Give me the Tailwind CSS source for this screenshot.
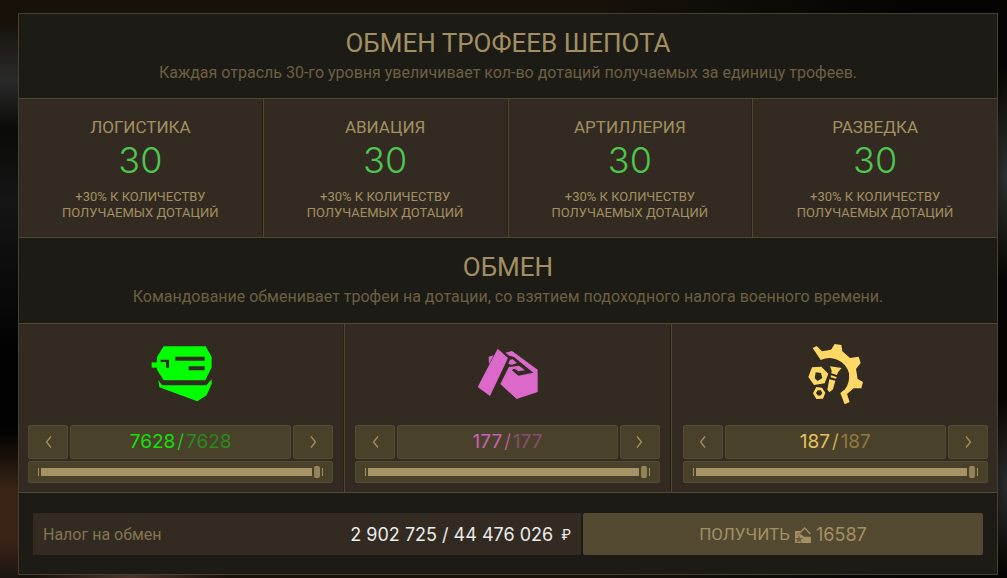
<!DOCTYPE html>
<html lang="ru">
<head>
<meta charset="utf-8">
<meta name="viewport" content="width=device-width, initial-scale=1">
<title>Обмен трофеев</title>
<script src="https://cdn.jsdelivr.net/npm/@tailwindcss/browser@4"></script>
</head>
<body class="min-h-screen bg-[#0b0a08] bg-[radial-gradient(ellipse_30px_110px_at_100%_175px,#303030,transparent),radial-gradient(ellipse_30px_90px_at_100%_485px,#2c2b2b,transparent),radial-gradient(ellipse_100px_30px_at_130px_578px,#4a352b,transparent),linear-gradient(to_right,#17110a_0,#17110a_60%,#050403_90%)] font-['Roboto','Liberation_Sans',sans-serif] text-[#a39062]">
<div class="min-h-screen bg-[linear-gradient(to_bottom,transparent_20px,#2a2a2a_80px,#0a0a09_130px,#141514_200px,#020202_350px,#020202_430px,#3a2415_490px,#3a2415_540px,#1c1512_578px)] bg-[length:18px_100%] bg-no-repeat pt-[13px] pr-[9px] pb-[3px] pl-[18px]">
<main class="border border-[#464030] bg-[#1c1b16]">
  <header class="flex h-[84px] flex-col items-center pt-[13px] text-center">
    <h1 class="text-[26px] leading-8">ОБМЕН ТРОФЕЕВ ШЕПОТА</h1>
    <p class="text-base leading-7 text-[#6c6042]">Каждая отрасль 30-го уровня увеличивает кол-во дотаций получаемых за единицу трофеев.</p>
  </header>

  <section class="grid grid-cols-4 gap-x-px border-y border-[#4f4730] bg-[#4f4730] text-center">
    <article class="border-r border-[#26221a] bg-[#332b21] pt-4 pb-4">
      <h2 class="text-[17px] leading-6">ЛОГИСТИКА</h2>
      <p class="font-['Inter'] text-4xl leading-[42px] font-light text-[#4fc552]">30</p>
      <p class="pt-2 text-[13px] leading-4">+30% К КОЛИЧЕСТВУ<br>ПОЛУЧАЕМЫХ ДОТАЦИЙ</p>
    </article>
    <article class="border-r border-[#26221a] bg-[#332b21] pt-4 pb-4">
      <h2 class="text-[17px] leading-6">АВИАЦИЯ</h2>
      <p class="font-['Inter'] text-4xl leading-[42px] font-light text-[#4fc552]">30</p>
      <p class="pt-2 text-[13px] leading-4">+30% К КОЛИЧЕСТВУ<br>ПОЛУЧАЕМЫХ ДОТАЦИЙ</p>
    </article>
    <article class="border-r border-[#26221a] bg-[#332b21] pt-4 pb-4">
      <h2 class="text-[17px] leading-6">АРТИЛЛЕРИЯ</h2>
      <p class="font-['Inter'] text-4xl leading-[42px] font-light text-[#4fc552]">30</p>
      <p class="pt-2 text-[13px] leading-4">+30% К КОЛИЧЕСТВУ<br>ПОЛУЧАЕМЫХ ДОТАЦИЙ</p>
    </article>
    <article class="bg-[#332b21] pt-4 pb-4">
      <h2 class="text-[17px] leading-6">РАЗВЕДКА</h2>
      <p class="font-['Inter'] text-4xl leading-[42px] font-light text-[#4fc552]">30</p>
      <p class="pt-2 text-[13px] leading-4">+30% К КОЛИЧЕСТВУ<br>ПОЛУЧАЕМЫХ ДОТАЦИЙ</p>
    </article>
  </section>

  <header class="flex h-[85px] flex-col items-center pt-[13px] text-center">
    <h2 class="text-[26px] leading-8">ОБМЕН</h2>
    <p class="text-base leading-7 text-[#6c6042]">Командование обменивает трофеи на дотации, со взятием подоходного налога военного времени.</p>
  </header>

  <section class="grid grid-cols-3 gap-x-px border-y border-[#4f4730] bg-[#4f4730]">
    <article class="flex flex-col border-r border-[#26221a] bg-[#332b21] pt-[18px] pr-[10px] pb-[9px] pl-[9px]">
      <svg class="mx-auto mb-[19px] size-16" viewBox="25 21 192 192" fill="#00ff00" aria-hidden="true">
        <path d="M69 34H195L213 66V97L194 136H69L49 104V66Z"/>
        <path d="M104 65H192V77H104ZM144 94H192V106H144Z" fill="#332b21"/>
        <path d="M60 74H85V98H76V82H60Z" fill="#332b21"/>
        <path d="M33 82H76V98H33Z"/>
        <path d="M53 135L64 151H197L213 133V146L198 181L170 199L56 157Z"/>
      </svg>
      <div class="flex gap-[2px]">
        <button type="button" aria-label="Меньше" class="flex h-[34px] w-10 items-center justify-center rounded-[2px] border border-[#544b32] bg-[#4a412b]"><svg class="h-[12px] w-[7px]" viewBox="0 0 7 12" fill="none" stroke="#a39062" stroke-width="1.3"><path d="M6 .5L1.500 6L6 11.500"/></svg></button>
        <label class="flex h-[34px] flex-1 items-center justify-center rounded-[2px] border border-[#544b32] bg-[#4a412b] pt-px font-['Inter'] text-[19px] text-[#2c8a1c]"><input type="text" value="7628" aria-label="Количество" class="field-sizing-content bg-transparent text-[#12e00c] outline-none"><span class="px-[2px] font-light text-[#12e00c]">/</span>7628</label>
        <button type="button" aria-label="Больше" class="flex h-[34px] w-10 items-center justify-center rounded-[2px] border border-[#544b32] bg-[#4a412b]"><svg class="h-[12px] w-[7px]" viewBox="0 0 7 12" fill="none" stroke="#a39062" stroke-width="1.3"><path d="M1 .5L5.500 6L1 11.500"/></svg></button>
      </div>
      <div class="mt-[2px] flex h-[22px] items-center gap-[2px] rounded-[2px] border border-[#544b32] bg-[#4a412b] px-[9px]">
        <span class="h-2 w-px bg-[#a39062]"></span>
        <input type="range" min="0" max="7628" value="7628" aria-label="Количество" class="h-2 min-w-0 flex-1 appearance-none bg-[#a69467] [&::-webkit-slider-thumb]:h-3 [&::-webkit-slider-thumb]:w-[6px] [&::-webkit-slider-thumb]:appearance-none [&::-webkit-slider-thumb]:rounded-[2px] [&::-webkit-slider-thumb]:bg-[#94845c] [&::-webkit-slider-thumb]:shadow-[0_0_0_2px_#4a412b]">
        <span class="h-2 w-px bg-[#a39062]"></span>
      </div>
    </article>

    <article class="flex flex-col border-r border-[#26221a] bg-[#332b21] px-[10px] pt-[18px] pb-[9px]">
      <svg class="mx-auto mb-[19px] size-16" viewBox="28 21 192 192" fill="#db69c9" aria-hidden="true">
        <path d="M96 41L127 69L73 183L36 156Z"/>
        <path d="M69 65L84 61L70 88Z"/>
        <path d="M119 53L139 48L216 104V171L153 192L104 147L130 95L147 98L139 106L158 122L203 113L145 66L131 62Z"/>
        <path d="M133 74L141 73L154 84L139 89L128 87Z"/>
        <path d="M131 96L160 92L178 106L158 109L152 104Z"/>
      </svg>
      <div class="flex gap-[2px]">
        <button type="button" aria-label="Меньше" class="flex h-[34px] w-10 items-center justify-center rounded-[2px] border border-[#544b32] bg-[#4a412b]"><svg class="h-[12px] w-[7px]" viewBox="0 0 7 12" fill="none" stroke="#a39062" stroke-width="1.3"><path d="M6 .5L1.500 6L6 11.500"/></svg></button>
        <label class="flex h-[34px] flex-1 items-center justify-center rounded-[2px] border border-[#544b32] bg-[#4a412b] pt-px font-['Inter'] text-[19px] text-[#8a4b73]"><input type="text" value="177" aria-label="Количество" class="field-sizing-content bg-transparent text-[#cb62b5] outline-none"><span class="px-[2px] font-light text-[#cb62b5]">/</span>177</label>
        <button type="button" aria-label="Больше" class="flex h-[34px] w-10 items-center justify-center rounded-[2px] border border-[#544b32] bg-[#4a412b]"><svg class="h-[12px] w-[7px]" viewBox="0 0 7 12" fill="none" stroke="#a39062" stroke-width="1.3"><path d="M1 .5L5.500 6L1 11.500"/></svg></button>
      </div>
      <div class="mt-[2px] flex h-[22px] items-center gap-[2px] rounded-[2px] border border-[#544b32] bg-[#4a412b] px-[9px]">
        <span class="h-2 w-px bg-[#a39062]"></span>
        <input type="range" min="0" max="177" value="177" aria-label="Количество" class="h-2 min-w-0 flex-1 appearance-none bg-[#a69467] [&::-webkit-slider-thumb]:h-3 [&::-webkit-slider-thumb]:w-[6px] [&::-webkit-slider-thumb]:appearance-none [&::-webkit-slider-thumb]:rounded-[2px] [&::-webkit-slider-thumb]:bg-[#94845c] [&::-webkit-slider-thumb]:shadow-[0_0_0_2px_#4a412b]">
        <span class="h-2 w-px bg-[#a39062]"></span>
      </div>
    </article>

    <article class="flex flex-col bg-[#332b21] pt-[18px] pr-[9px] pb-[9px] pl-[11px]">
      <svg class="mx-auto mb-[19px] size-16" viewBox="22 21 192 192" fill="#ffd966" aria-hidden="true">
        <path d="M51 39L63 33L79 49L106 44L117 27L137 30L140 49L163 69L189 65L195 84L181 102L186 132L202 141L197 160L174 160L154 177L162 201L147 208L134 174L148 163Q163 143 160 115Q153 86 125 74Q100 64 75 75Z"/>
        <path fill-rule="evenodd" d="M49 97L77 95L98 116L87 145L55 150L38 126ZM60 112L57 130L66 138L80 129L76 114Z"/>
        <path fill-rule="evenodd" d="M62 156L79 158L89 173L82 191L62 192L52 175ZM66 166L61 174L67 182L76 181L80 173L75 166Z"/>
        <path d="M103 94L138 99L127 112L124 120L107 115L108 107ZM106 121L123 126L121 131L105 127ZM101 133L119 137L112 163L101 172L95 164Z"/>
      </svg>
      <div class="flex gap-[2px]">
        <button type="button" aria-label="Меньше" class="flex h-[34px] w-10 items-center justify-center rounded-[2px] border border-[#544b32] bg-[#4a412b]"><svg class="h-[12px] w-[7px]" viewBox="0 0 7 12" fill="none" stroke="#a39062" stroke-width="1.3"><path d="M6 .5L1.500 6L6 11.500"/></svg></button>
        <label class="flex h-[34px] flex-1 items-center justify-center rounded-[2px] border border-[#544b32] bg-[#4a412b] pt-px font-['Inter'] text-[19px] text-[#8e7a40]"><input type="text" value="187" aria-label="Количество" class="field-sizing-content bg-transparent text-[#e3c35d] outline-none"><span class="px-[2px] font-light text-[#e3c35d]">/</span>187</label>
        <button type="button" aria-label="Больше" class="flex h-[34px] w-10 items-center justify-center rounded-[2px] border border-[#544b32] bg-[#4a412b]"><svg class="h-[12px] w-[7px]" viewBox="0 0 7 12" fill="none" stroke="#a39062" stroke-width="1.3"><path d="M1 .5L5.500 6L1 11.500"/></svg></button>
      </div>
      <div class="mt-[2px] flex h-[22px] items-center gap-[2px] rounded-[2px] border border-[#544b32] bg-[#4a412b] px-[9px]">
        <span class="h-2 w-px bg-[#a39062]"></span>
        <input type="range" min="0" max="187" value="187" aria-label="Количество" class="h-2 min-w-0 flex-1 appearance-none bg-[#a69467] [&::-webkit-slider-thumb]:h-3 [&::-webkit-slider-thumb]:w-[6px] [&::-webkit-slider-thumb]:appearance-none [&::-webkit-slider-thumb]:rounded-[2px] [&::-webkit-slider-thumb]:bg-[#94845c] [&::-webkit-slider-thumb]:shadow-[0_0_0_2px_#4a412b]">
        <span class="h-2 w-px bg-[#a39062]"></span>
      </div>
    </article>
  </section>

  <footer class="flex gap-[2px] px-[14px] pt-5 pb-[19px]">
    <div class="flex h-[42px] flex-1 items-center justify-between bg-[#332b21] px-[10px] pt-[2px]">
      <span class="text-base text-[#84754e]">Налог на обмен</span>
      <span class="flex items-center gap-2 font-['Inter'] text-lg text-[#ececec]">2 902 725 / 44 476 026 <span class="text-sm">₽</span></span>
    </div>
    <button type="button" class="flex h-[42px] w-[400px] items-center justify-center gap-[5px] rounded-[2px] bg-[#534a31] pt-px text-[17px] text-[#a39062]">ПОЛУЧИТЬ
      <svg class="h-4 w-4" viewBox="0 0 48 48" fill="#a39062" aria-hidden="true">
        <path d="M0 12H17L7 21H0Z"/>
        <path d="M11 21L29 3L46 21" fill="none" stroke="#a39062" stroke-width="4"/>
        <path d="M0 22H18L27 29H48V48H0Z"/>
        <path d="M12 24L15 33L25 33L17 39L21 48L12 43L4 48L7 39L0 33L9 33Z" fill="#6b5e3e"/>
      </svg>
      <span class="font-['Inter'] text-lg">16587</span></button>
  </footer>
</main>
</div>
</body>
</html>
